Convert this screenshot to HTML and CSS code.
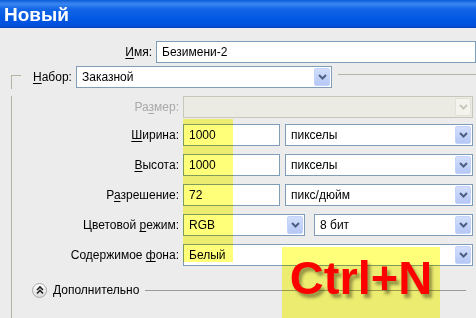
FILE: index.html
```html
<!DOCTYPE html>
<html lang="ru">
<head>
    <meta charset="UTF-8">
    <meta name="viewport" content="width=device-width, initial-scale=1.0">
    <title>Новый</title>
    <link rel="stylesheet" href="styles.css">
</head>
<body>
    <div class="titlebar">Новый</div>

    <div class="row row-name">
        <div class="label"><u>И</u>мя:</div>
        <div class="field field-name">Безимени-2</div>
    </div>

    <div class="legend">
        <div class="corner"></div>
        <div class="legend-label"><u>Н</u>абор:</div>
        <div class="select select-preset">
            <span>Заказной</span>
            <div class="drop"><svg width="9" height="6" viewBox="0 0 9 6"><path d="M1 1l3.5 3.5L8 1" fill="none" stroke="#4d6185" stroke-width="2"/></svg></div>
        </div>
        <div class="legend-line"></div>
    </div>

    <div class="group">
        <div class="row row-size">
            <div class="label disabled">Ра<u>з</u>мер:</div>
            <div class="select select-wide is-disabled">
                <span></span>
                <div class="drop"><svg width="9" height="6" viewBox="0 0 9 6"><path d="M1 1l3.5 3.5L8 1" fill="none" stroke="#c9c7ba" stroke-width="2"/></svg></div>
            </div>
        </div>
        <div class="row row-first">
            <div class="label"><u>Ш</u>ирина:</div>
            <div class="field field-num">1000</div>
            <div class="select select-unit">
                <span>пикселы</span>
                <div class="drop"><svg width="9" height="6" viewBox="0 0 9 6"><path d="M1 1l3.5 3.5L8 1" fill="none" stroke="#4d6185" stroke-width="2"/></svg></div>
            </div>
        </div>
        <div class="row">
            <div class="label"><u>В</u>ысота:</div>
            <div class="field field-num">1000</div>
            <div class="select select-unit">
                <span>пикселы</span>
                <div class="drop"><svg width="9" height="6" viewBox="0 0 9 6"><path d="M1 1l3.5 3.5L8 1" fill="none" stroke="#4d6185" stroke-width="2"/></svg></div>
            </div>
        </div>
        <div class="row">
            <div class="label">Р<u>а</u>зрешение:</div>
            <div class="field field-num">72</div>
            <div class="select select-unit">
                <span>пикс/дюйм</span>
                <div class="drop"><svg width="9" height="6" viewBox="0 0 9 6"><path d="M1 1l3.5 3.5L8 1" fill="none" stroke="#4d6185" stroke-width="2"/></svg></div>
            </div>
        </div>
        <div class="row">
            <div class="label">Цветовой <u>р</u>ежим:</div>
            <div class="select select-mode">
                <span>RGB</span>
                <div class="drop"><svg width="9" height="6" viewBox="0 0 9 6"><path d="M1 1l3.5 3.5L8 1" fill="none" stroke="#4d6185" stroke-width="2"/></svg></div>
            </div>
            <div class="select select-bits">
                <span>8 бит</span>
                <div class="drop"><svg width="9" height="6" viewBox="0 0 9 6"><path d="M1 1l3.5 3.5L8 1" fill="none" stroke="#4d6185" stroke-width="2"/></svg></div>
            </div>
        </div>
        <div class="row">
            <div class="label">Содержимое <u>ф</u>она:</div>
            <div class="select select-wide">
                <span>Белый</span>
                <div class="drop"><svg width="9" height="6" viewBox="0 0 9 6"><path d="M1 1l3.5 3.5L8 1" fill="none" stroke="#4d6185" stroke-width="2"/></svg></div>
            </div>
        </div>
        <div class="advanced">
            <div class="toggle"><svg width="10" height="10" viewBox="0 0 10 10"><path d="M2 5l3-3 3 3M2 8.5l3-3 3 3" fill="none" stroke="#222" stroke-width="1.6"/></svg></div>
            <div class="advanced-label">Дополнительно</div>
            <div class="advanced-line"></div>
        </div>
    </div>

    <div class="mark"></div>
    <div class="hotkey"><span>Ctrl+N</span></div>
</body>
</html>
```

FILE: styles.css
```css
body {
    margin: 0;
    height: 318px;
    overflow: hidden;
    position: relative;
    background-color: #ececec;
    font-family: "Liberation Sans", Arial, sans-serif;
    font-size: 12px;
    color: #000;
}

u {
    text-decoration-thickness: 1px;
    text-underline-offset: 2px;
}

.titlebar {
    height: 28px;
    padding-left: 4px;
    line-height: 29px;
    font-size: 19px;
    font-weight: bold;
    color: #fff;
    background: linear-gradient(#0a5bd6 0%, #3a86f2 14%, #1466e6 32%, #0057e2 70%, #0050dc 92%, #0040b8 100%);
}

.row {
    display: flex;
    align-items: center;
    height: 22px;
    margin-top: 8px;
}

.row-name {
    margin-top: 13px;
}

.row-first {
    margin-top: 6px;
}

.label {
    width: 167px;
    padding-right: 4px;
    text-align: right;
    white-space: nowrap;
}

.row-name .label {
    width: 179px;
}

.label.disabled {
    color: #a9a9a9;
}

.field,
.select {
    box-sizing: border-box;
    height: 22px;
    border: 1px solid #7f9db9;
    background-color: #fff;
    display: flex;
    align-items: center;
    padding-left: 5px;
}

.field-name {
    width: 320px;
    flex-shrink: 0;
}

.field-num {
    width: 97px;
    margin-right: 5px;
}

.select span {
    flex: 1;
}

.drop {
    width: 16px;
    height: 18px;
    margin-right: 1px;
    border: 1px solid #c3d3fd;
    box-sizing: border-box;
    border-radius: 2px;
    background: linear-gradient(#d2defb, #b5c8f5);
    display: flex;
    align-items: center;
    justify-content: center;
}

.select.is-disabled {
    border-color: #c9c7ba;
    background-color: #ebebe4;
}

.is-disabled .drop {
    border-color: #e4e2d8;
    background: #f4f3ee;
}

.select-preset {
    width: 256px;
}

.select-wide {
    width: 290px;
}

.select-unit {
    width: 188px;
}

.select-mode {
    width: 122px;
    margin-right: 9px;
}

.select-bits {
    width: 159px;
}

/* group frame */
.legend {
    display: flex;
    align-items: flex-start;
    height: 22px;
    margin-top: 3px;
    margin-left: 11px;
}

.corner {
    width: 9px;
    height: 13px;
    margin-top: 9px;
    border-top: 1px solid #b5b3a6;
    border-left: 1px solid #b5b3a6;
}

.legend-label {
    width: 43px;
    margin-left: 12px;
    line-height: 22px;
}

.legend-line {
    flex: 1;
    margin-top: 8px;
    margin-left: 6px;
    border-top: 1px solid #b5b3a6;
}

.group {
    margin-left: 11px;
    height: 230px;
    border-left: 1px solid #b5b3a6;
}

.advanced {
    display: flex;
    align-items: center;
    margin-top: 16px;
    height: 16px;
}

.toggle {
    box-sizing: border-box;
    width: 15px;
    height: 15px;
    margin-left: 20px;
    border: 1px solid #a8a8a8;
    border-radius: 50%;
    background: linear-gradient(#ffffff, #dcdcdc);
    display: flex;
    align-items: center;
    justify-content: center;
}

.advanced-label {
    margin-left: 6px;
}

.advanced-line {
    flex: 1;
    margin-left: 6px;
    margin-right: 10px;
    border-top: 1px solid #9a9a9a;
}

/* highlight overlays */
.mark {
    position: absolute;
    left: 183px;
    top: 119px;
    width: 50px;
    height: 143px;
    background-color: #ffff7a;
    mix-blend-mode: multiply;
}

.hotkey {
    position: absolute;
    left: 282px;
    top: 247px;
    width: 158px;
    height: 80px;
    text-align: center;
    font-size: 47px;
    font-weight: bold;
    line-height: 62px;
    color: #ff0000;
}

.hotkey::before {
    content: "";
    position: absolute;
    top: 0;
    right: 0;
    bottom: 0;
    left: 0;
    background-color: #ffff7a;
    mix-blend-mode: multiply;
}

.hotkey span {
    position: relative;
    text-shadow: 3px 4px 3px rgba(70, 70, 30, 0.5);
}
```
